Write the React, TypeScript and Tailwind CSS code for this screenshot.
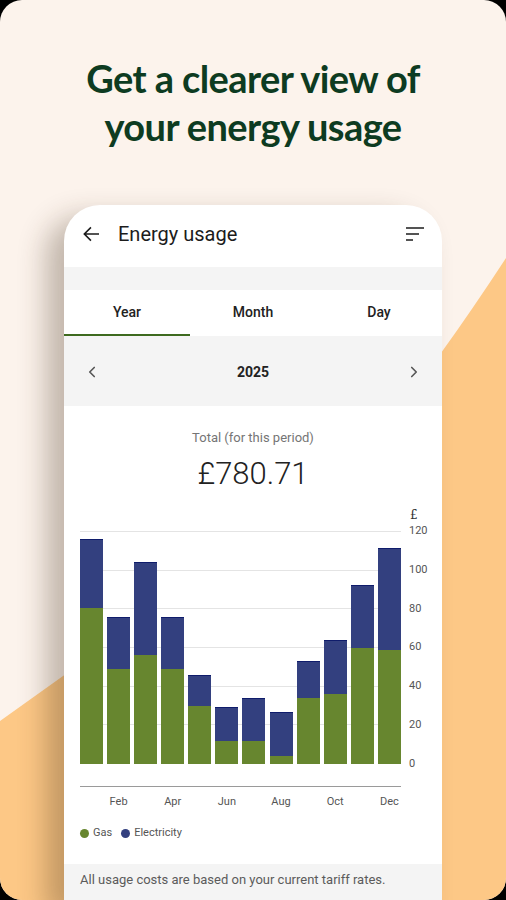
import { ChevronLeft, ChevronRight } from 'lucide-react';

const months = [
    { gas: 80.1, total: 115.9 },
    { gas: 48.9, total: 75.8, label: 'Feb' },
    { gas: 56.1, total: 103.8 },
    { gas: 48.9, total: 75.8, label: 'Apr' },
    { gas: 29.7, total: 46.0 },
    { gas: 11.6, total: 29.5, label: 'Jun' },
    { gas: 11.6, total: 34.0 },
    { gas: 4.3, total: 26.9, label: 'Aug' },
    { gas: 34.1, total: 53.0 },
    { gas: 36.2, total: 64.0, label: 'Oct' },
    { gas: 59.7, total: 92.3 },
    { gas: 58.7, total: 111.4, label: 'Dec' },
];

const ticks = [120, 100, 80, 60, 40, 20, 0];
const PX_PER_UNIT = 233 / 120;

export default function App() {
    return (
        <div className="w-[506px] h-[900px] bg-black">
            <div className="relative h-full rounded-[22px] overflow-hidden bg-[#fcf3ec]">
                {/* orange backdrop */}
                <svg className="absolute inset-0" width="506" height="900" viewBox="0 0 506 900">
                    <path d="M0 721 L70 671 L300 500 L441 353 Q472 310 506 258 L506 900 L0 900 Z" fill="#fdc886" />
                </svg>

                <h1
                    className="relative pt-[54px] text-center text-[38px] leading-[48px] font-bold tracking-[-0.6px] text-[#0d3b21]"
                    style={{ fontFamily: 'Lato, "Open Sans", sans-serif' }}
                >
                    Get a clearer view of
                    <br />
                    your energy usage
                </h1>

                {/* phone */}
                <div
                    className="relative mx-[64px] mt-[55px] rounded-t-[36px] bg-white overflow-hidden shadow-[-18px_12px_28px_rgba(60,40,20,0.3)]"
                    style={{ fontFamily: 'Roboto, "Noto Sans", sans-serif' }}
                >
                    <div className="h-[62px] flex items-center pl-[19px] pr-[18px] pb-[4px]">
                        <svg width="16" height="16" viewBox="4 4 16 16" className="text-[#1c1c1c]">
                            <path d="M20 11.2H7.2l5.3-5.3L11.4 4.8 4.2 12l7.2 7.2 1.1-1.1-5.3-5.3H20z" fill="currentColor" />
                        </svg>
                        <span className="ml-[19px] text-[20px] text-[#1c1c1c]">Energy usage</span>
                        <svg width="18" height="14" viewBox="0 0 18 14" className="ml-auto text-[#1c1c1c]">
                            <path d="M0 1h18M0 7h13M0 13h7" stroke="currentColor" strokeWidth="1.6" />
                        </svg>
                    </div>

                    <div className="h-[23px] bg-[#f4f4f4]" />

                    <div className="grid grid-cols-3 h-[46px] text-[14px] font-medium text-[#222] pb-[2px]">
                        <div className="flex items-center justify-center border-b-2 border-[#3e6a1f] -mb-[2px]">Year</div>
                        <div className="flex items-center justify-center">Month</div>
                        <div className="flex items-center justify-center">Day</div>
                    </div>

                    <div className="h-[70px] bg-[#f4f4f4] flex items-center justify-between px-[19px] pt-[2px] text-[#555]">
                        <ChevronLeft size={18} strokeWidth={2.2} />
                        <span className="text-[14px] font-bold text-[#222]">2025</span>
                        <ChevronRight size={18} strokeWidth={2.2} />
                    </div>

                    <div className="pt-[24px] text-center">
                        <div className="text-[13px] leading-[16px] text-[#757575]">Total (for this period)</div>
                        <div className="mt-[9px] text-[31px] leading-[38px] font-light text-[#222]">£780.71</div>
                    </div>

                    {/* chart */}
                    <div className="pl-[16px] pr-[11px] pt-[14px]">
                        <div className="flex">
                            <div className="w-[321px]" />
                            <div className="pl-[9px] text-[12px] leading-[16px] text-[#333]" style={{ fontFamily: '"DejaVu Serif", serif' }}>£</div>
                        </div>
                        <div className="flex mt-[8px]">
                            <div className="relative w-[321px] h-[233px]">
                                <div className="absolute inset-0 flex flex-col justify-between">
                                    {ticks.map((t) => (
                                        <div key={t} className={t === 0 ? 'h-px' : 'h-px bg-[#e4e4e4]'} />
                                    ))}
                                </div>
                                <div className="relative h-full flex items-end justify-between">
                                    {months.map((m, i) => (
                                        <div key={i} className="w-[23px] flex flex-col">
                                            <div
                                                className="bg-[#33407f] border-t border-[#0f1c6b]"
                                                style={{ height: (m.total - m.gas) * PX_PER_UNIT }}
                                            />
                                            <div className="bg-[#67862f]" style={{ height: m.gas * PX_PER_UNIT }} />
                                        </div>
                                    ))}
                                </div>
                            </div>
                            <div className="relative w-[29px] h-[233px] text-[11px] text-[#555]">
                                <div className="absolute left-[8px] top-[-8px] bottom-[-8px] flex flex-col justify-between leading-[16px]">
                                    {ticks.map((t) => (
                                        <span key={t}>{t}</span>
                                    ))}
                                </div>
                            </div>
                        </div>

                        <div className="mt-[22px] w-[321px] h-px bg-[#9a9a9a]" />
                        <div className="w-[321px] flex justify-between mt-[8px] text-[11px] leading-[14px] text-[#555]">
                            {months.map((m, i) => (
                                <span key={i} className="w-[23px] text-center">{m.label ?? ''}</span>
                            ))}
                        </div>

                        <div className="mt-[16px] flex items-center text-[11px] text-[#555]">
                            <span className="w-[9px] h-[9px] rounded-full bg-[#67862f]" />
                            <span className="ml-[4px]">Gas</span>
                            <span className="ml-[9px] w-[9px] h-[9px] rounded-full bg-[#33407f]" />
                            <span className="ml-[4px]">Electricity</span>
                        </div>
                    </div>

                    <div className="mt-[22px] h-[40px] bg-[#f4f4f4] pl-[16px] pt-[6px] text-[13px] text-[#5b5b5b]">
                        All usage costs are based on your current tariff rates.
                    </div>
                </div>
            </div>
        </div>
    );
}
